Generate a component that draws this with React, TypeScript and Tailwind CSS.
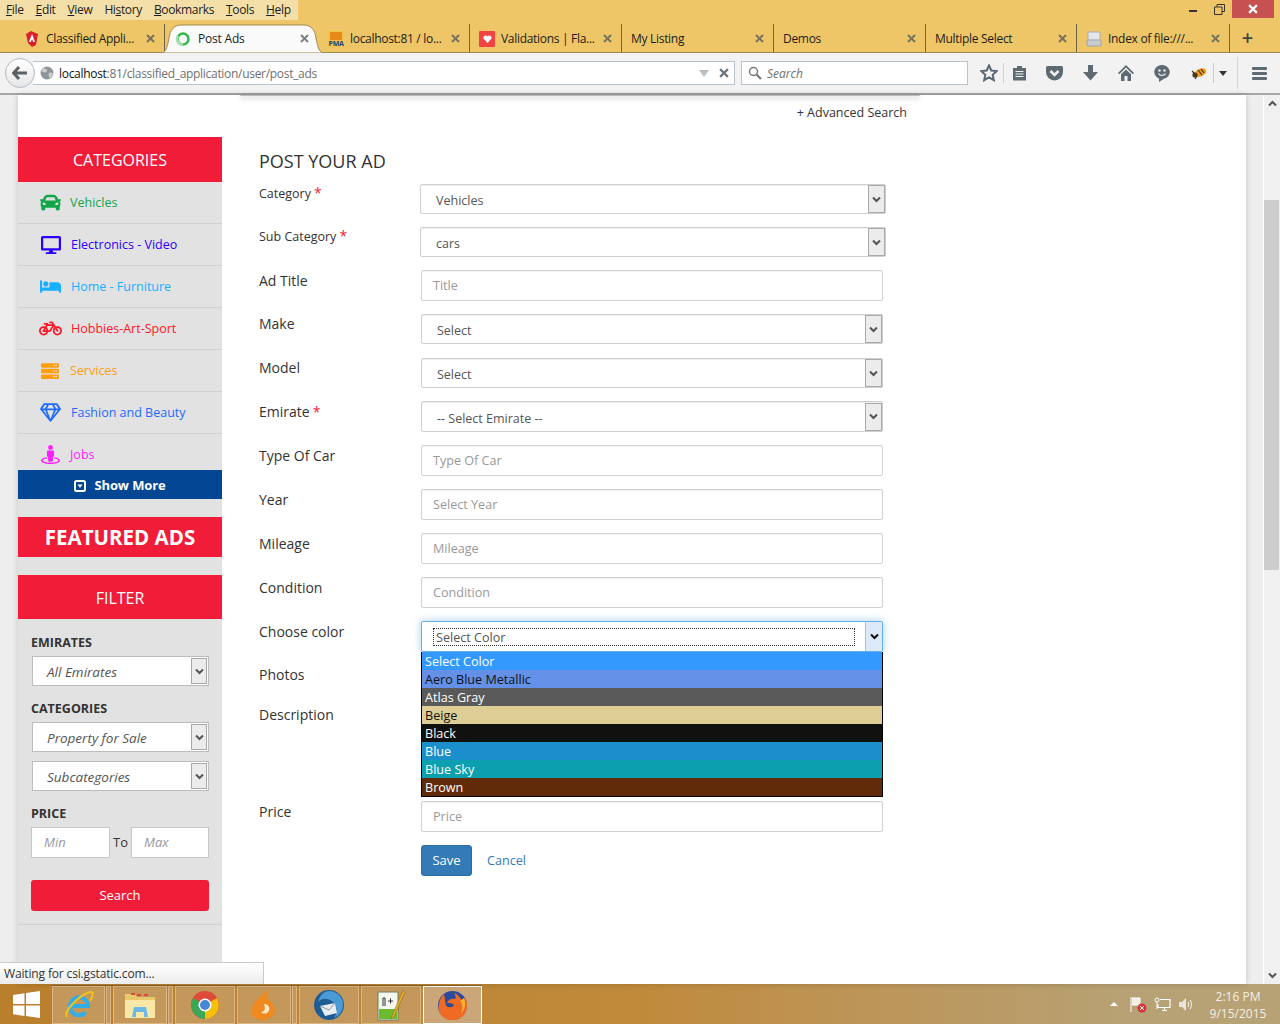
import { ReactNode } from "react";
import {
  FaBed,
  FaBicycle,
  FaCar,
  FaDesktop,
  FaRegGem,
  FaServer,
  FaStreetView,
} from "react-icons/fa";

const font = "font-['Open_Sans','Noto_Sans',sans-serif]";

function Chevron({ dark }: { dark?: boolean }) {
  return (
    <svg width="9" height="7" viewBox="0 0 9 7">
      <path d="M1 1.5 4.5 5 8 1.5" fill="none" stroke={dark ? "#111" : "#555"} strokeWidth="2" />
    </svg>
  );
}

function CloseX({ size = 9, color = "#77735f" }: { size?: number; color?: string }) {
  return (
    <svg className="shrink-0" width={size} height={size} viewBox="0 0 9 9">
      <path d="M1 1l7 7M8 1 1 8" stroke={color} strokeWidth="2" />
    </svg>
  );
}

function Tab({ title, icon, width }: { title: string; icon?: ReactNode; width: string }) {
  return (
    <div className={`flex h-full items-center border-r border-[#6f6544] pl-[9px] pr-[9px] pt-px text-[12px] tracking-[-0.3px] text-[#1c1c1c] ${width}`}>
      {icon && <span className="mr-[6px] flex w-[16px] shrink-0 justify-center">{icon}</span>}
      <span className="flex-1 whitespace-nowrap">{title}</span>
      <CloseX />
    </div>
  );
}

function NavIcon({ children, className }: { children: ReactNode; className: string }) {
  return <div className={`flex items-center justify-center ${className}`}>{children}</div>;
}

function Browser() {
  return (
    <div className={`h-[95px] shrink-0 bg-[#eec667] ${font}`}>
      <div className="flex h-[24px]">
        <div className="flex h-[20px] w-[298px] items-center gap-[12px] bg-[#f5dfa8] pl-[6px] text-[12px] tracking-[-0.35px] text-[#1c1c1c]">
          <span><u>F</u>ile</span>
          <span><u>E</u>dit</span>
          <span><u>V</u>iew</span>
          <span>Hi<u>s</u>tory</span>
          <span><u>B</u>ookmarks</span>
          <span><u>T</u>ools</span>
          <span><u>H</u>elp</span>
        </div>
        <div className="ml-auto mr-[6px] flex h-[18px] items-start">
          <NavIcon className="h-[18px] w-[26px]"><span className="mt-[4px] h-[2px] w-[8px] bg-[#333]" /></NavIcon>
          <NavIcon className="h-[18px] w-[26px]">
            <svg width="11" height="11" viewBox="0 0 11 11"><path d="M3 2.5V.5h7.500v7H8M.5 3h7.500v7.500H.5z" fill="none" stroke="#333" /></svg>
          </NavIcon>
          <NavIcon className="h-[18px] w-[42px] bg-[#c75050]"><CloseX size={10} color="#fff" /></NavIcon>
        </div>
      </div>
      <div className="flex h-[29px] border-b border-[#a0894f] pl-[15px]">
        <Tab title="Classified Appli..." width="w-[150px]" icon={
          <svg width="14" height="16" viewBox="0 0 14 16"><path d="M6 0 13 3 11 14 7 16 3 12 1 3z" fill="#d8212b" /><path d="M7 3 4 11h1.800L7 8l1.200 3H10z" fill="#fff" /></svg>
        } />
        <div className="relative flex h-[29px] w-[154px] items-center pl-[10px] pr-[10px] text-[12px] tracking-[-0.2px] text-[#1c1c1c]">
          <svg className="absolute -left-[5px] top-0 h-[29px] w-[165px]" viewBox="0 0 165 29">
            <path d="M0 29C6 29 7 24 9 14 10 6 14 1 21 1H144C151 1 155 6 156 14 158 24 159 29 165 29Z" fill="#fafafa" stroke="#a0894f" />
          </svg>
          <svg className="relative mr-[7px]" width="16" height="16" viewBox="0 0 16 16"><circle cx="8" cy="8" r="5.500" fill="none" stroke="#34b84a" strokeWidth="2.500" /><path d="M8 13.500A5.500 5.500 0 0 1 3 5" fill="none" stroke="#a5dfae" strokeWidth="2.500" /></svg>
          <span className="relative flex-1">Post Ads</span>
          <span className="relative"><CloseX color="#7c8083" /></span>
        </div>
        <Tab title="localhost:81 / lo..." width="w-[151px]" icon={
          <div className="flex h-[16px] w-[16px] flex-col items-center justify-between bg-[#f4c04c]">
            <div className="mt-[1px] h-[8px] w-[12px] bg-[#e58a18]" />
            <span className="text-[7px] font-bold leading-[7px] text-[#23408e]">PMA</span>
          </div>
        } />
        <Tab title="Validations | Fla..." width="w-[152px]" icon={
          <div className="flex h-[16px] w-[16px] items-center justify-center rounded-[1px] bg-[#f04444]">
            <svg width="9" height="8" viewBox="0 0 9 8"><path d="M4.500 8 .5 3.500C-.5 1.500 3 -1 4.500 1.500 6 -1 9.500 1.500 8.500 3.500Z" fill="#fff" /></svg>
          </div>
        } />
        <Tab title="My Listing" width="w-[152px]" />
        <Tab title="Demos" width="w-[152px]" />
        <Tab title="Multiple Select" width="w-[151px]" />
        <Tab title="Index of file:///..." width="w-[153px]" icon={
          <svg width="16" height="16" viewBox="0 0 16 16"><rect x="2" y="1" width="12" height="9" rx="1" fill="#e3e6ea" stroke="#aab0b6" /><rect x="1" y="9" width="14" height="6" rx="1" fill="#c8ccd1" stroke="#9ba1a7" /></svg>
        } />
        <div className="flex w-[35px] items-center justify-center text-[20px] font-semibold leading-none text-[#444]">+</div>
      </div>
      <div className="flex h-[42px] items-center border-b-2 border-[#a7a7a7] bg-[#f2f2f2]">
        <div className="relative z-10 ml-[5px] flex h-[30px] w-[30px] items-center justify-center rounded-full border border-[#b3bcc4] bg-gradient-to-b from-white to-[#e7e7e7]">
          <svg width="16" height="14" viewBox="0 0 16 14"><path d="M7 1 1.500 7 7 13M2 7h13" fill="none" stroke="#5b6165" strokeWidth="3" /></svg>
        </div>
        <div className="-ml-[2px] flex h-[24px] w-[702px] items-center border border-l-0 border-[#b8c4cf] bg-white pl-[7px] pr-[5px] text-[12px] tracking-[-0.3px]">
          <svg className="mr-[5px]" width="14" height="14" viewBox="0 0 14 14"><circle cx="7" cy="7" r="6.500" fill="#8f9499" /><path d="M3 2c2 1 3 0 4 2S5 7 3 6 1 4 3 2zM9 7c2-1 4 0 4 1s-2 4-3 4-2-4-1-5z" fill="#c9cdd0" /></svg>
          <span className="pt-[2px] text-[#111]">localhost</span>
          <span className="pt-[2px] text-[#6f6f6f]">:81/classified_application/user/post_ads</span>
          <span className="ml-auto mr-[10px] h-0 w-0 border-x-[5px] border-t-[7px] border-x-transparent border-t-[#b6c0c8]" />
          <CloseX size={10} color="#6d7780" />
        </div>
        <div className="ml-[6px] flex h-[24px] w-[227px] items-center border border-[#b8c4cf] bg-white pl-[6px] text-[12px] italic text-[#6f6f6f]">
          <svg className="mr-[5px]" width="14" height="14" viewBox="0 0 14 14"><circle cx="5.500" cy="5.500" r="4" fill="none" stroke="#777" strokeWidth="1.500" /><path d="M8.500 8.500 13 13" stroke="#777" strokeWidth="2.200" /></svg>
          <span className="pt-[2px]">Search</span>
        </div>
        <NavIcon className="ml-[11px] h-[24px] w-[20px]">
          <svg width="18" height="18" viewBox="0 0 18 18"><path d="M9 1.500 11.300 6.500 16.800 7.100 12.700 10.800 13.800 16.200 9 13.500 4.200 16.200 5.300 10.800 1.200 7.100 6.700 6.500Z" fill="none" stroke="#5b6770" strokeWidth="2" /></svg>
        </NavIcon>
        <div className="ml-[4px] h-[20px] w-px bg-[#d0d0d0]" />
        <NavIcon className="ml-[7px] h-[24px] w-[16px]">
          <svg width="15" height="16" viewBox="0 0 15 16"><path d="M1 3h4V1h5v2h4v12.500H1z" fill="#5e6a72" /><path d="M3.500 6.500h8M3.500 9h8M3.500 11.500h8" stroke="#f2f2f2" /></svg>
        </NavIcon>
        <NavIcon className="ml-[18px] h-[24px] w-[18px]">
          <svg width="17" height="15" viewBox="0 0 17 15"><path d="M1.500 0h14A1.500 1.500 0 0 1 17 1.500V6a8.500 8.500 0 0 1-17 0V1.500A1.500 1.500 0 0 1 1.500 0z" fill="#5e6a72" /><path d="M4.500 5 8.500 9l4-4" fill="none" stroke="#f2f2f2" strokeWidth="2.500" /></svg>
        </NavIcon>
        <NavIcon className="ml-[18px] h-[24px] w-[18px]">
          <svg width="15" height="16" viewBox="0 0 15 16"><path d="M5 0h5v7h5l-7.500 8.500L0 7h5z" fill="#5e6a72" /></svg>
        </NavIcon>
        <NavIcon className="ml-[18px] h-[24px] w-[18px]">
          <svg width="16" height="16" viewBox="0 0 16 16"><path d="M8 0 16 8l-1.200 1.200L8 2.600 1.200 9.200 0 8zM8 4.500l5 4.800V16H9.500v-5h-3v5H3V9.300z" fill="#5e6a72" /></svg>
        </NavIcon>
        <NavIcon className="ml-[18px] h-[24px] w-[18px]">
          <svg width="16" height="17" viewBox="0 0 16 17"><path d="M8 0a7.500 7 0 0 1 2 13.800L5 17v-3.500A7.500 7 0 0 1 8 0z" fill="#5e6a72" /><circle cx="5.500" cy="5.500" r="1.200" fill="#f2f2f2" /><circle cx="10.500" cy="5.500" r="1.200" fill="#f2f2f2" /><path d="M4.500 8.500c1.500 2.500 5.500 2.500 7 0" fill="none" stroke="#f2f2f2" strokeWidth="1.300" /></svg>
        </NavIcon>
        <NavIcon className="ml-[19px] h-[24px] w-[18px]">
          <svg width="16" height="13" viewBox="0 0 16 13"><ellipse cx="9.500" cy="5.500" rx="6" ry="3.800" transform="rotate(-25 9.500 5.500)" fill="#f09a1a" /><circle cx="4" cy="8" r="2.600" fill="#4a3a20" /><path d="M7 3 11 8M10 2l3 4M1 4l3 3M4 12l2-3" stroke="#3d3020" strokeWidth="1.200" /></svg>
        </NavIcon>
        <div className="ml-[5px] h-[20px] w-px bg-[#c8c8c8]" />
        <span className="ml-[5px] h-0 w-0 border-x-[4px] border-t-[5px] border-x-transparent border-t-[#333]" />
        <div className="ml-[10px] h-[32px] w-px bg-[#d4d4d4]" />
        <div className="ml-[14px] flex w-[15px] flex-col gap-[2px]">
          <span className="h-[3px] rounded-[1px] bg-[#5e6a72]" />
          <span className="h-[3px] rounded-[1px] bg-[#5e6a72]" />
          <span className="h-[3px] rounded-[1px] bg-[#5e6a72]" />
        </div>
      </div>
    </div>
  );
}

const categories = [
  { name: "Vehicles", color: "text-[#12a54a]", Icon: FaCar, size: 21, row: "h-[42px] border-b", gap: "w-[52px]" },
  { name: "Electronics - Video", color: "text-[#2a00ff]", Icon: FaDesktop, size: 20, row: "h-[42px] border-b", gap: "w-[53px]" },
  { name: "Home - Furniture", color: "text-[#17b0ff]", Icon: FaBed, size: 21, row: "h-[42px] border-b", gap: "w-[53px]" },
  { name: "Hobbies-Art-Sport", color: "text-[#ff1626]", Icon: FaBicycle, size: 23, row: "h-[42px] border-b", gap: "w-[53px]" },
  { name: "Services", color: "text-[#ff9d0a]", Icon: FaServer, size: 18, row: "h-[42px] border-b", gap: "w-[52px]" },
  { name: "Fashion and Beauty", color: "text-[#1f6bff]", Icon: FaRegGem, size: 21, row: "h-[42px] border-b", gap: "w-[53px]" },
  { name: "Jobs", color: "text-[#ff1fff]", Icon: FaStreetView, size: 19, row: "h-[36px] pt-[5px]", gap: "w-[52px]" },
];

function SideSelect({ text, className }: { text: string; className: string }) {
  return (
    <div className={`ml-[14px] mr-[13px] flex h-[30px] items-center border border-[#bdbdbd] bg-white ${className}`}>
      <span className="flex-1 pl-[14px] pt-[2px] text-[13.5px] italic text-[#555]">{text}</span>
      <div className="mr-px flex h-[26px] w-[16px] items-center justify-center border border-[#a9a9a9] bg-[#ececec]">
        <Chevron />
      </div>
    </div>
  );
}

function Sidebar() {
  return (
    <div className="flex w-[204px] shrink-0 flex-col">
      <div className="h-[42px] shrink-0 bg-white" />
      <div className="flex-1 bg-[#e2e2e2]">
        <div className="flex h-[45px] items-center justify-center bg-[#f01c38] text-[16px] text-white">CATEGORIES</div>
        {categories.map((c) => (
          <div key={c.name} className={`flex items-center border-[#d2d2d2] ${c.row} ${c.color}`}>
            <div className={`flex shrink-0 justify-center pl-[12px] ${c.gap}`}>
              <c.Icon size={c.size} className="shrink-0" />
            </div>
            <span className="pt-[2px] text-[12.5px]">{c.name}</span>
          </div>
        ))}
        <div className="flex h-[29px] items-center justify-center gap-[8px] bg-[#034694] pt-[2px] text-[13px] font-bold tracking-[-0.1px] text-white">
          <svg width="12" height="12" viewBox="0 0 12 12">
            <rect x="1" y="1" width="10" height="10" rx="1.500" fill="none" stroke="#fff" strokeWidth="2" />
            <path d="M3.500 4.500h5L6 8z" fill="#fff" />
          </svg>
          Show More
        </div>
        <div className="mt-[18px] flex h-[40px] items-center justify-center bg-[#f01c38] text-[20.5px] font-bold text-white">FEATURED ADS</div>
        <div className="mt-[18px] flex h-[44px] items-center justify-center bg-[#f01c38] pt-px text-[16px] text-white">FILTER</div>
        <div className="ml-[13px] mt-[15px] text-[12.5px] font-bold leading-[18px] text-[#333]">EMIRATES</div>
        <SideSelect text="All Emirates" className="mt-[4px]" />
        <div className="ml-[13px] mt-[14px] text-[12.5px] font-bold leading-[18px] text-[#333]">CATEGORIES</div>
        <SideSelect text="Property for Sale" className="mt-[4px]" />
        <SideSelect text="Subcategories" className="mt-[9px]" />
        <div className="ml-[13px] mt-[14px] text-[12.5px] font-bold leading-[18px] text-[#333]">PRICE</div>
        <div className="mx-[13px] mt-[4px] flex h-[31px] items-center">
          <div className="flex h-full w-[79px] items-center border border-[#c8c8c8] bg-white pl-[12px] text-[13px] italic text-[#999]">Min</div>
          <span className="w-[21px] text-center text-[13px] text-[#333]">To</span>
          <div className="flex h-full flex-1 items-center border border-[#c8c8c8] bg-white pl-[12px] text-[13px] italic text-[#999]">Max</div>
        </div>
        <div className="mx-[13px] mt-[22px] flex h-[31px] items-center justify-center rounded-[3px] bg-[#f01c38] text-[13px] text-white">Search</div>
        <div className="mt-[13px] border-t border-[#d2d2d2]" />
      </div>
    </div>
  );
}

function Select({ text, width, tall }: { text: string; width: string; tall?: boolean }) {
  return (
    <div className={`flex items-center rounded-[2px] border border-[#cfcfcf] bg-white shadow-[inset_0_1px_1px_rgba(0,0,0,0.07)] ${tall ? "h-[31px]" : "h-[30px]"} ${width}`}>
      <span className="flex-1 pl-[15px] pt-[5px] text-[12.5px] text-[#555]">{text}</span>
      <div className="flex h-[28px] w-[17px] items-center justify-center border border-[#a9a9a9] bg-[#ececec]">
        <Chevron />
      </div>
    </div>
  );
}

function Input({ placeholder }: { placeholder: string }) {
  return (
    <div className="flex h-[31px] w-[462px] items-center rounded-[2px] border border-[#d2d2d2] bg-white pl-[11px] pt-[2px] text-[12.6px] text-[#999] shadow-[inset_0_1px_1px_rgba(0,0,0,0.05)]">
      {placeholder}
    </div>
  );
}

function Row({ label, star, height, small, up, children }: { label: string; star?: boolean; height: string; small?: boolean; up?: boolean; children?: ReactNode }) {
  return (
    <div className={`relative flex ${height}`}>
      <div className={`w-[162px] shrink-0 text-[#333] ${small ? "-mt-px text-[12.5px] leading-[20px]" : "text-[14px] leading-[22px]"} ${up ? "-mt-px" : ""}`}>
        {label}
        {star && <span className="ml-[3px] text-[14px] text-[#f01c38]">*</span>}
      </div>
      {children}
    </div>
  );
}

const colors = [
  { name: "Select Color", cls: "bg-[#3399ff] text-white" },
  { name: "Aero Blue Metallic", cls: "bg-[#6490e8] text-[#111]" },
  { name: "Atlas Gray", cls: "bg-[#5a5a5a] text-white" },
  { name: "Beige", cls: "bg-[#dfcd96] text-[#111]" },
  { name: "Black", cls: "bg-[#111110] text-white" },
  { name: "Blue", cls: "bg-[#1b8fcb] text-white" },
  { name: "Blue Sky", cls: "bg-[#0c9fb0] text-white" },
  { name: "Brown", cls: "bg-[#612a08] text-white" },
];

function PostForm() {
  return (
    <div className="flex-1 bg-white pl-[37px]">
      <div className="flex h-[36px] items-center justify-end pr-[339px] text-[12.5px] text-[#333]">+ Advanced Search</div>
      <div className="mt-[18px] h-[35px] text-[18px] leading-[24px] text-[#333]">POST YOUR AD</div>
      <Row label="Category" star small height="h-[43px]"><div className="-ml-px"><Select text="Vehicles" width="w-[466px]" /></div></Row>
      <Row label="Sub Category" star small height="h-[43px]"><div className="-ml-px"><Select text="cars" width="w-[466px]" /></div></Row>
      <Row label="Ad Title" height="h-[44px]"><Input placeholder="Title" /></Row>
      <Row label="Make" up height="h-[44px]"><Select text="Select" width="w-[462px]" /></Row>
      <Row label="Model" up height="h-[43px]"><Select text="Select" width="w-[462px]" /></Row>
      <Row label="Emirate" star height="h-[44px]"><Select text="-- Select Emirate --" width="w-[462px]" tall /></Row>
      <Row label="Type Of Car" height="h-[44px]"><Input placeholder="Type Of Car" /></Row>
      <Row label="Year" height="h-[44px]"><Input placeholder="Select Year" /></Row>
      <Row label="Mileage" height="h-[44px]"><Input placeholder="Mileage" /></Row>
      <Row label="Condition" height="h-[44px]"><Input placeholder="Condition" /></Row>
      <Row label="Choose color" height="h-[44px]">
        <div className="relative h-[31px] w-[462px]">
          <div className="flex h-[31px] items-center rounded-[2px] border border-[#66afe9] bg-white pl-[11px] shadow-[0_0_8px_rgba(102,175,233,0.6)]">
            <div className="h-[18px] w-[422px] border border-dotted border-[#333] pl-[2px] pt-px text-[12.6px] leading-[16px] text-[#555]">Select Color</div>
            <div className="ml-auto flex h-[29px] w-[17px] items-center justify-center border-l border-[#9cc4ea] bg-[#dbe9f9]">
              <Chevron dark />
            </div>
          </div>
          <div className="absolute left-0 top-[31px] z-10 w-[462px] border border-t-0 border-black">
            {colors.map((c) => (
              <div key={c.name} className={`h-[18px] pl-[3px] text-[12.6px] leading-[19px] ${c.cls}`}>{c.name}</div>
            ))}
          </div>
        </div>
      </Row>
      <Row label="Photos" up height="h-[40px]" />
      <Row label="Description" up height="h-[96px]" />
      <Row label="Price" height="h-[44px]"><Input placeholder="Price" /></Row>
      <div className="ml-[162px] flex items-center">
        <div className="flex h-[31px] w-[51px] items-center justify-center rounded-[3px] border border-[#2e6da4] bg-[#337ab7] text-[13px] text-white">Save</div>
        <span className="ml-[15px] pt-[2px] text-[12.6px] text-[#337ab7]">Cancel</span>
      </div>
    </div>
  );
}

function Scrollbar() {
  return (
    <div className="flex w-[17px] shrink-0 flex-col border-l border-white bg-[#f0f0f0]">
      <div className="flex h-[17px] items-center justify-center"><span className="rotate-180"><Chevron /></span></div>
      <div className="mt-[88px] h-[370px] w-[15px] bg-[#cdcdcd]" />
      <div className="mt-auto flex h-[17px] items-center justify-center"><Chevron /></div>
    </div>
  );
}

function TaskButton({ children, width, sliver, active }: { children: ReactNode; width: string; sliver?: boolean; active?: boolean }) {
  return (
    <div className="flex h-full">
      <div className={`flex h-full items-center justify-center border ${active ? "border-white bg-[#cba678]" : "border-[#d9b684] bg-[#c4975a]"} ${width}`}>{children}</div>
      {sliver && <div className="ml-px h-full w-[5px] border border-[#d9b684] bg-[#c4975a]" />}
    </div>
  );
}

function Taskbar() {
  return (
    <div className={`flex h-[40px] shrink-0 items-center bg-gradient-to-r from-[#b97f2c] via-[#c08a3b] via-50% to-[#b7a276] to-90% ${font}`}>
      <div className="flex w-[52px] shrink-0 justify-center">
        <svg width="27" height="27" viewBox="0 0 27 27"><path d="M0 4 11.500 2.300V13H0zM13 2 27 0V13H13zM0 14.500H11.500V25L0 23.300zM13 14.500H27V27L13 25z" fill="#fff" /></svg>
      </div>
      <div className="flex h-[39px] gap-[2px] self-end border-t border-[#8f6425]">
        <TaskButton width="w-[53px]" sliver>
          <svg width="32" height="32" viewBox="0 0 32 32">
            <path d="M8 17h17a9 9 0 1 0-2.500 6.500" fill="none" stroke="#33ade8" strokeWidth="4" />
            <path d="M4 28C0 24 14 7 27 3c4-1 3 5 0 9" fill="none" stroke="#f0c419" strokeWidth="2" />
          </svg>
        </TaskButton>
        <TaskButton width="w-[54px]" sliver>
          <svg width="32" height="28" viewBox="0 0 32 28">
            <path d="M1 3h10l2 3h18v20H1z" fill="#e9c96c" />
            <path d="M1 9h30v18H1z" fill="#f9e7a6" />
            <path d="M7 3h4M13 4h4M20 4h4" stroke="#d84a3a" strokeWidth="2" />
            <path d="M10 16h12l2 10h-4v-5h-8v5H8z" fill="#69b8e8" />
          </svg>
        </TaskButton>
        <TaskButton width="w-[60px]">
          <svg width="30" height="30" viewBox="0 0 30 30">
            <circle cx="15" cy="15" r="14" fill="#dd4b39" />
            <path d="M15 15 27 8A14 14 0 0 1 15 29z" fill="#f4c20d" />
            <path d="M15 15 15 29A14 14 0 0 1 3 8z" fill="#3aa757" />
            <circle cx="15" cy="15" r="6.500" fill="#fff" />
            <circle cx="15" cy="15" r="5" fill="#4a86d8" />
          </svg>
        </TaskButton>
        <TaskButton width="w-[54px]" sliver>
          <svg width="26" height="32" viewBox="0 0 26 32">
            <path d="M15 0c3 5-1 8 4 12 5 5 6 10 3 14-4 6-15 7-20 1C-2 21 3 13 8 9c3-3 6-5 7-9z" fill="#f08a1e" />
            <path d="M13 15c5 0 7 5 4 8-2 2-5 2-7 0 3 0 5-2 3-8z" fill="#fde9c7" />
          </svg>
        </TaskButton>
        <TaskButton width="w-[60px]">
          <svg width="32" height="32" viewBox="0 0 32 32">
            <circle cx="16" cy="16" r="15" fill="#1f5c96" />
            <path d="M16 2A14 14 0 0 1 30 16c0 6-4 11-9 13 5-7 3-17-7-19-4-1-7 1-9 3 2-7 6-11 11-11z" fill="#4a9ad4" />
            <path d="M7 17l15-3 2 10-12 3z" fill="#e9edf1" />
            <path d="M7 17l9 4 6-7" fill="none" stroke="#8a98a6" />
          </svg>
        </TaskButton>
        <TaskButton width="w-[60px]">
          <svg width="30" height="32" viewBox="0 0 30 32">
            <path d="M2 3h20v28H2z" fill="#f4f7ee" stroke="#6d7d5b" />
            <path d="M3 20h18v10H3z" fill="#6cbb2e" />
            <path d="M7 17V9h2v8M12 12h5M14.500 9.500v5" stroke="#333" fill="none" />
            <path d="M27 1 16 27l-1 3 3-2L29 3z" fill="#e2b020" stroke="#8a5a20" strokeWidth=".5" />
          </svg>
        </TaskButton>
        <TaskButton width="w-[59px]" active>
          <svg width="31" height="31" viewBox="0 0 31 31">
            <circle cx="15.500" cy="15.500" r="14.500" fill="#2b4a9b" />
            <path d="M7 4C2 9 0 17 3 23c4 8 16 10 23 3 5-5 5-13 2-19-1 3-2 4-3 5C24 8 21 4 17 3c2 3 2 5 1 6-4-1-7 1-8 4 2 0 5 0 7 2-1 3-7 3-8 0-1-3-1-7-2-11z" fill="#ef6a22" />
            <path d="M27 8c2 6 1 12-3 15 2-4 2-9-1-12z" fill="#f9b233" />
          </svg>
        </TaskButton>
      </div>
      <div className="ml-auto flex items-center pr-[14px] text-[#f4efe2]">
        <span className="mr-[12px] h-0 w-0 border-x-[4px] border-b-[4px] border-x-transparent border-b-white" />
        <svg className="mr-[7px]" width="17" height="17" viewBox="0 0 17 17"><path d="M1 1v15M2 2h8v7H2" fill="#f4efe2" stroke="#fff" /><circle cx="12" cy="12" r="4.500" fill="#d8313a" /><path d="M10 10l4 4M14 10l-4 4" stroke="#fff" /></svg>
        <svg className="mr-[7px]" width="17" height="17" viewBox="0 0 17 17"><path d="M6 3.500h10v8H4v-3M8 14.500h5M10.500 11.500v3" fill="none" stroke="#fff" strokeWidth="1.200" /><circle cx="3" cy="4" r="2" fill="none" stroke="#fff" /><path d="M3 6v7" stroke="#fff" /></svg>
        <svg className="mr-[15px]" width="17" height="17" viewBox="0 0 17 17"><path d="M1 6h3l4-4v13l-4-4H1z" fill="#e8e4da" /><path d="M10 6c1 1.500 1 3.500 0 5M12 4c2 3 2 6 0 9" fill="none" stroke="#fff" /></svg>
        <div className="flex w-[56px] flex-col items-center pt-[2px] text-[12px] leading-[17px]">
          <span>2:16 PM</span>
          <span>9/15/2015</span>
        </div>
      </div>
    </div>
  );
}

export default function App() {
  return (
    <div className="relative flex h-[1024px] w-[1280px] flex-col overflow-hidden bg-[#eeeeee]">
      <Browser />
      <div className={`relative flex min-h-0 flex-1 ${font}`}>
        <div className="w-[18px] shrink-0" />
        <div className="flex w-[1228px] shrink-0 shadow-[0_0_6px_rgba(0,0,0,0.18)]">
          <Sidebar />
          <PostForm />
        </div>
        <div className="w-[17px] shrink-0" />
        <Scrollbar />
        <div className="absolute left-[240px] top-0 h-px w-[680px] rounded-b-[10px] bg-[#bbb] shadow-[0_2px_5px_rgba(0,0,0,0.45)]" />
        <div className="absolute bottom-0 left-0 flex h-[22px] w-[264px] items-center border-r border-t border-[#c9c9c9] bg-gradient-to-b from-white to-[#ececec] pl-[4px] text-[12px] tracking-[-0.15px] text-[#333]">
          Waiting for csi.gstatic.com...
        </div>
      </div>
      <Taskbar />
    </div>
  );
}
